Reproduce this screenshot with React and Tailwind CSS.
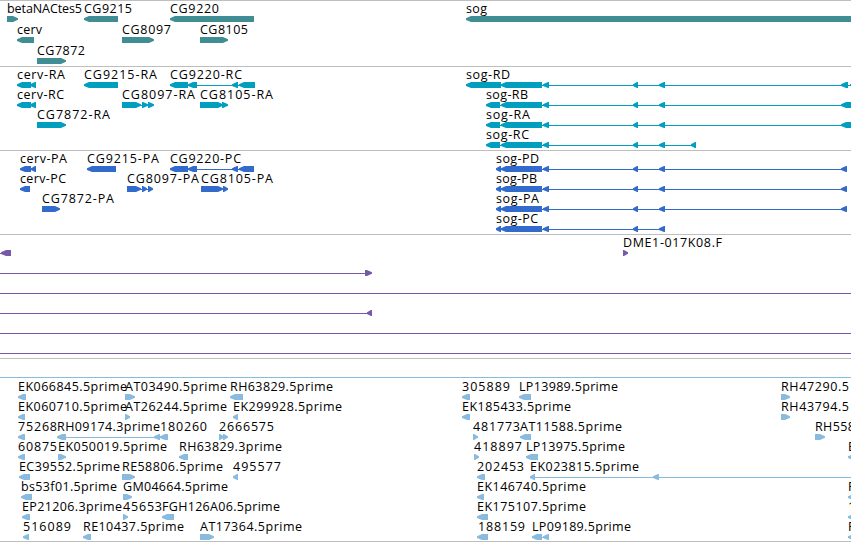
import clsx from "clsx";

const VIEW_WIDTH = 851;
const END = 870; // features that run past the right edge

// label: [text, start, end]
// exon: [start, end, direction]
// line: [start, end]
const sogExons = [
  [501, 542, "l"],
  [543, 549, "l"],
  [633, 638, "l"],
  [659, 665, "l"],
];

const tracks = [
  {
    id: "genes",
    color: "text-[#408e94]",
    className: "pb-0.5",
    rowClass: "h-[21px]",
    rows: [
      {
        labels: [["betaNACtes5", 7, 82], ["CG9215", 84, 132], ["CG9220", 170, 219], ["sog", 466, 487]],
        exons: [[7, 18, "r"], [84, 118, "l"], [170, 254, "l"], [466, END, "l"]],
      },
      {
        labels: [["cerv", 17, 42], ["CG8097", 122, 171], ["CG8105", 200, 248]],
        exons: [[17, 34, "l"], [122, 154, "r"], [200, 228, "r"]],
      },
      {
        labels: [["CG7872", 37, 85]],
        exons: [[37, 66, "r"]],
      },
    ],
  },
  {
    id: "transcripts",
    color: "text-[#009fc0]",
    className: "pb-[3px]",
    rowClass: "h-5",
    rows: [
      {
        labels: [["cerv-RA", 17, 65], ["CG9215-RA", 84, 157], ["CG9220-RC", 170, 242], ["sog-RD", 466, 510]],
        exons: [
          [17, 31, "l"], [30, 36, "l"], [84, 118, "l"],
          [170, 188, "l"], [188, 197, "l"], [232, 238, "l"], [239, 255, "l"],
          [466, 501, "l"], ...sogExons, [841, 848, "l"], [850, END, "l"],
        ],
        lines: [[188, 240], [501, END]],
      },
      {
        labels: [["cerv-RC", 17, 64], ["CG8097-RA", 122, 195], ["CG8105-RA", 200, 273], ["sog-RB", 486, 528]],
        exons: [
          [17, 31, "l"], [30, 36, "l"],
          [122, 141, "r"], [142, 148, "r"], [148, 154, "r"],
          [200, 223, "r"], [222, 228, "r"],
          [486, 500, "l"], ...sogExons, [841, END, "l"],
        ],
        lines: [[138, 149], [500, 842]],
      },
      {
        labels: [["CG7872-RA", 37, 110], ["sog-RA", 486, 530]],
        exons: [[37, 66, "r"], [486, 500, "l"], ...sogExons, [841, END, "l"]],
        lines: [[500, 842]],
      },
      {
        labels: [["sog-RC", 486, 529]],
        exons: [[486, 500, "l"], ...sogExons, [691, 696, "l"]],
        lines: [[500, 695]],
      },
    ],
  },
  {
    id: "proteins",
    color: "text-[#336bcc]",
    className: "pb-[3px]",
    rowClass: "h-5",
    rows: [
      {
        labels: [["cerv-PA", 20, 67], ["CG9215-PA", 87, 159], ["CG9220-PC", 170, 241], ["sog-PD", 496, 539]],
        exons: [
          [20, 31, "l"], [31, 36, "l"], [87, 116, "l"],
          [170, 188, "l"], [188, 197, "l"], [232, 238, "l"], [239, 254, "l"],
          [496, 501, "l"], ...sogExons, [841, 847, "l"],
        ],
        lines: [[188, 240], [500, 846]],
      },
      {
        labels: [["cerv-PC", 20, 66], ["CG8097-PA", 127, 199], ["CG8105-PA", 201, 273], ["sog-PB", 496, 537]],
        exons: [
          [20, 30, "l"],
          [127, 141, "r"], [142, 147, "r"], [148, 153, "r"],
          [201, 223, "r"], [223, 228, "r"],
          [496, 501, "l"], ...sogExons, [841, 847, "l"],
        ],
        lines: [[138, 149], [500, 846]],
      },
      {
        labels: [["CG7872-PA", 42, 114], ["sog-PA", 496, 539]],
        exons: [[42, 60, "r"], [496, 501, "l"], ...sogExons, [841, 847, "l"]],
        lines: [[500, 846]],
      },
      {
        labels: [["sog-PC", 496, 538]],
        exons: [[496, 501, "l"], ...sogExons],
        lines: [[500, 664]],
      },
    ],
  },
  {
    id: "clones",
    color: "text-[#7759aa]",
    className: "pb-[3px]",
    rowClass: "h-5",
    rows: [
      {
        labels: [["DME1-017K08.F", 623, 722]],
        exons: [[1, 11, "l"], [623, 628, "r"]],
        lines: [[0, 4]],
      },
      { exons: [[365, 372, "r"]], lines: [[0, 366]] },
      { lines: [[0, END]] },
      { exons: [[367, 372, "l"]], lines: [[0, 370]] },
      { lines: [[0, END]] },
      { lines: [[0, END]] },
    ],
  },
  {
    id: "ests",
    color: "text-[#88bbdd]",
    className: "pb-0.5",
    rowClass: "h-5",
    rows: [
      { lines: [[0, END]] },
      {
        labels: [
          ["EK066845.5prime", 18, 127], ["AT03490.5prime", 125, 227], ["RH63829.5prime", 230, 333],
          ["305889", 462, 510], ["LP13989.5prime", 519, 618], ["RH47290.5", 781, 849],
        ],
        exons: [[18, 26, "l"], [125, 135, "r"], [230, 243, "l"], [462, 470, "l"], [519, 531, "l"], [781, 790, "r"]],
      },
      {
        labels: [
          ["EK060710.5prime", 18, 127], ["AT26244.5prime", 125, 227], ["EK299928.5prime", 233, 342],
          ["EK185433.5prime", 462, 571], ["RH43794.5", 781, 849],
        ],
        exons: [[18, 25, "l"], [125, 130, "r"], [233, 238, "l"], [462, 470, "l"], [781, 790, "r"]],
      },
      {
        labels: [
          ["75268", 18, 57], ["RH09174.3prime", 57, 160], ["180260", 160, 207], ["2666575", 219, 274],
          ["481773", 473, 520], ["AT11588.5prime", 520, 622], ["RH558", 815, 855],
        ],
        exons: [
          [18, 25, "l"], [57, 66, "l"], [154, 160, "l"], [160, 168, "l"],
          [219, 224, "r"], [223, 228, "r"], [473, 478, "r"], [520, 531, "l"], [815, 825, "r"],
        ],
        lines: [[66, 162]],
      },
      {
        labels: [
          ["60875", 18, 57], ["EK050019.5prime", 58, 167], ["RH63829.3prime", 179, 282],
          ["418897", 474, 522], ["LP13975.5prime", 526, 625], ["E", 848, 855],
        ],
        exons: [[18, 25, "l"], [58, 66, "r"], [179, 188, "l"], [474, 479, "r"], [526, 538, "l"], [848, END, "l"]],
      },
      {
        labels: [
          ["EC39552.5prime", 19, 120], ["RE58806.5prime", 122, 223], ["495577", 233, 281],
          ["202453", 477, 524], ["EK023815.5prime", 530, 639],
        ],
        exons: [[19, 30, "l"], [122, 135, "r"], [233, 238, "l"], [477, 485, "l"], [530, 535, "l"], [653, 659, "l"]],
        lines: [[534, END]],
      },
      {
        labels: [["bs53f01.5prime", 21, 117], ["GM04664.5prime", 123, 228], ["EK146740.5prime", 477, 586], ["R", 848, 856]],
        exons: [[21, 32, "l"], [123, 132, "r"], [477, 484, "l"], [848, END, "l"]],
      },
      {
        labels: [
          ["EP21206.3prime", 22, 122], ["45653", 123, 162], ["FGH126A06.5prime", 162, 280],
          ["EK175107.5prime", 477, 586], ["1", 848, 855],
        ],
        exons: [[22, 30, "l"], [123, 128, "r"], [162, 174, "l"], [477, 488, "l"], [848, END, "l"]],
      },
      {
        labels: [
          ["516089", 23, 71], ["RE10437.5prime", 83, 184], ["AT17364.5prime", 200, 302],
          ["188159", 478, 525], ["LP09189.5prime", 532, 631], ["R", 848, 856],
        ],
        exons: [
          [23, 29, "l"], [83, 91, "l"], [200, 214, "r"],
          [477, 488, "l"], [532, 542, "l"], [543, 549, "l"], [848, END, "l"],
        ],
        lines: [[542, 546]],
      },
    ],
  },
];

function Exon({ start, end, direction }) {
  const head = Math.min(5, end - start - 1);
  const points =
    direction === "l"
      ? `${start},17.3 ${start + head},15 ${end},15 ${end},21 ${start + head},21 ${start},18.9`
      : `${start},15 ${end - head},15 ${end},17.3 ${end},18.7 ${end - head},21 ${start},21`;
  return <polygon points={points} fill="currentColor" />;
}

function FeatureRow({ row, className }) {
  const { labels = [], exons = [], lines = [] } = row;

  return (
    <div className={className}>
      <svg width={VIEW_WIDTH} height="22" className="block overflow-visible">
        {lines.map(([start, end]) => (
          <rect key={start} x={start} y="18" width={end - start} height="1" fill="currentColor" />
        ))}
        {exons.map(([start, end, direction]) => (
          <Exon key={start} start={start} end={end} direction={direction} />
        ))}
        {labels.map(([text, start, end]) => (
          <text
            key={text + start}
            x={start}
            y="12"
            textLength={end - start}
            className="fill-black font-['Open_Sans','Noto_Sans',sans-serif] font-[380] text-[12.5px]"
          >
            {text}
          </text>
        ))}
      </svg>
    </div>
  );
}

function Track({ track }) {
  return (
    <section className={clsx("border-t border-[#bebebe]", track.color, track.className)}>
      {track.rows.map((row, i) => (
        <FeatureRow key={i} row={row} className={track.rowClass} />
      ))}
    </section>
  );
}

export default function App() {
  return (
    <main className="w-[851px] h-[542px] overflow-hidden bg-white border-b border-[#bebebe]">
      {tracks.map((track) => (
        <Track key={track.id} track={track} />
      ))}
    </main>
  );
}
